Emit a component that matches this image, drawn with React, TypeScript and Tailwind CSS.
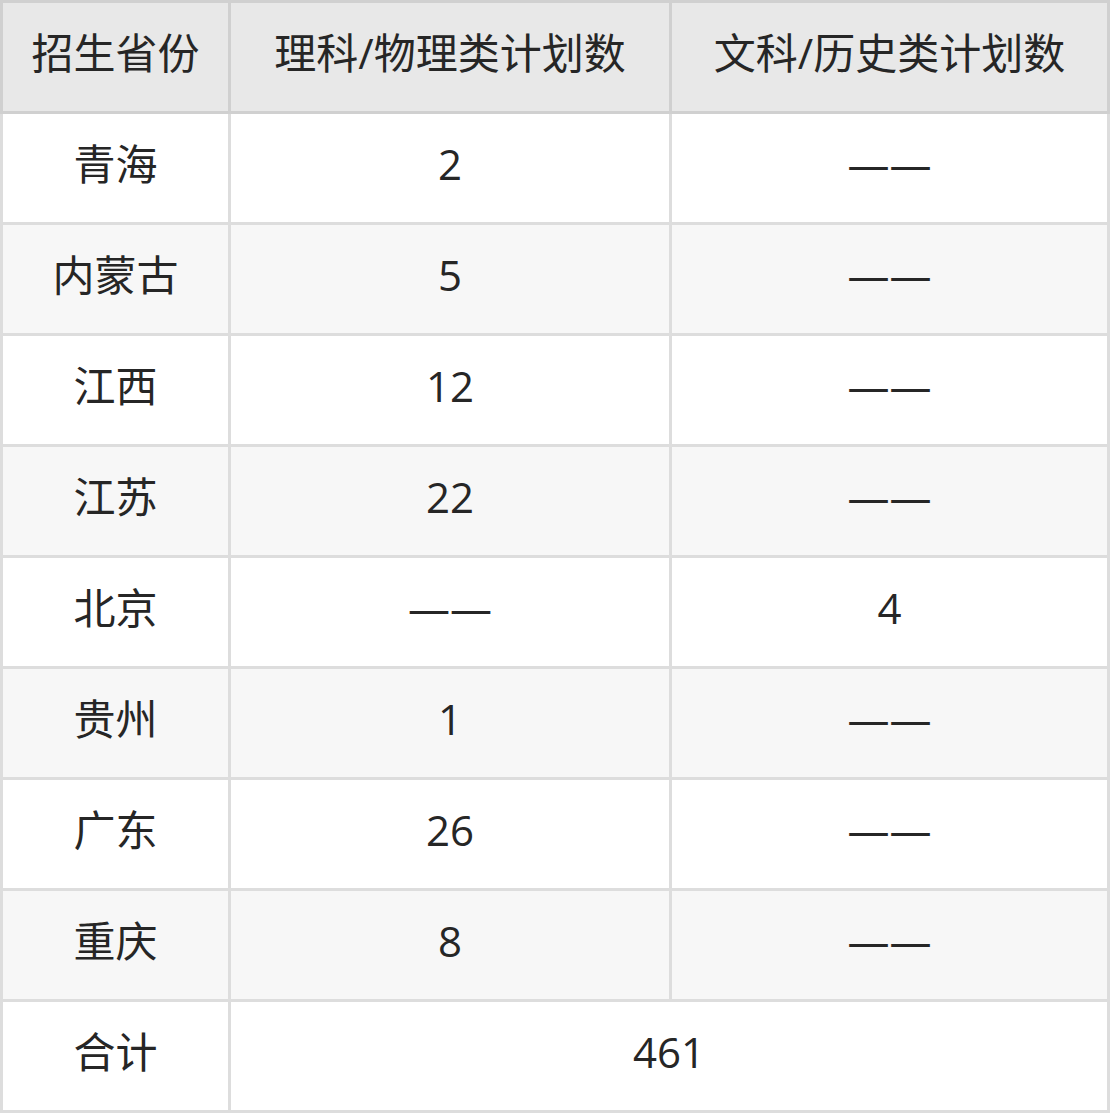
const rows: [string, string, string][] = [
  ['青海', '2', '——'],
  ['内蒙古', '5', '——'],
  ['江西', '12', '——'],
  ['江苏', '22', '——'],
  ['北京', '——', '4'],
  ['贵州', '1', '——'],
  ['广东', '26', '——'],
  ['重庆', '8', '——'],
]

const cell = 'flex h-[108px] items-center justify-center pb-[10px]'

export default function App() {
  return (
    <div
      className="w-[1110px] text-[42px] text-[#262626]"
      style={{ fontFamily: '"Open Sans", "Noto Sans CJK SC", sans-serif' }}
    >
      {/* header */}
      <div className="grid grid-cols-[225px_438px_435px] gap-[3px] bg-[#d0d0d0] p-[3px]">
        <div className={`${cell} bg-[#e8e8e8]`}>招生省份</div>
        <div className={`${cell} bg-[#e8e8e8]`}>理科/物理类计划数</div>
        <div className={`${cell} bg-[#e8e8e8]`}>文科/历史类计划数</div>
      </div>

      {/* body */}
      <div className="grid grid-cols-[225px_438px_435px] gap-[3px] bg-[#dddddd] px-[3px] pb-[3px]">
        {rows.map(([prov, sci, arts], i) => {
          const bg = i % 2 === 0 ? 'bg-white' : 'bg-[#f7f7f7]'
          return [
            <div key={`${prov}-a`} className={`${cell} ${bg}`}>{prov}</div>,
            <div key={`${prov}-b`} className={`${cell} ${bg}`}>{sci}</div>,
            <div key={`${prov}-c`} className={`${cell} ${bg}`}>{arts}</div>,
          ]
        })}
        <div className={`${cell} bg-white`}>合计</div>
        <div className={`${cell} col-span-2 bg-white`}>461</div>
      </div>
    </div>
  )
}
